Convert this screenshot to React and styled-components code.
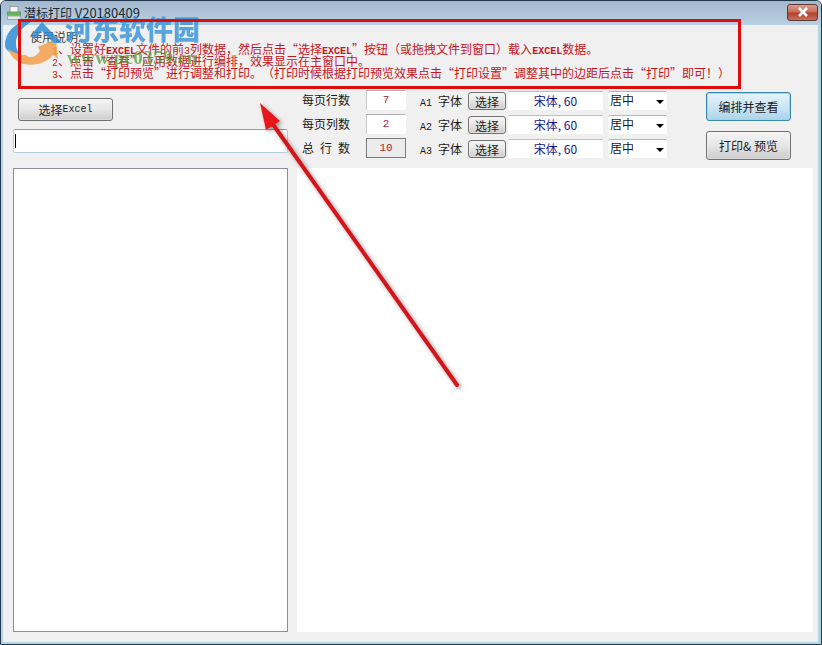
import React from "react"
import styled, { createGlobalStyle } from "styled-components"

const CJK = `"Noto Sans CJK SC", "Liberation Sans", sans-serif`

const GlobalStyle = createGlobalStyle`
  html, body {
    margin: 0;
    padding: 0;
    background: #f0f0f0;
  }
  * {
    box-sizing: border-box;
    text-spacing-trim: space-all;
  }
`

const Win = styled.div`
  position: relative;
  width: 822px;
  height: 645px;
  overflow: hidden;
  display: flex;
  flex-direction: column;
  border: 1px solid #22394d;
  border-radius: 6px 6px 0 0;
  background: #b5d3e6;
  font-family: ${CJK};
  font-size: 12px;
  color: #1a1a1a;
`

const TitleBar = styled.div`
  height: 24px;
  flex: none;
  display: flex;
  align-items: center;
  padding: 1px 3px 0 6px;
  background: linear-gradient(#a3b8cd, #b9d0e1);
`

const TitleText = styled.div`
  margin-left: 3px;
  margin-top: -2px;
  font-size: 12px;
  line-height: 14px;
  color: #1c2733;
`

const TitleVersion = styled.span`
  font-size: 13px;
`

const CloseBtn = styled.div`
  margin-left: auto;
  margin-top: -3px;
  width: 31px;
  height: 17px;
  display: flex;
  align-items: center;
  justify-content: center;
  border: 1px solid #5a3a35;
  border-radius: 3px;
  background: linear-gradient(#dc9d8e 0%, #c96a56 48%, #b0402c 52%, #c9705c 100%);
`

const Client = styled.div`
  flex: 1;
  min-height: 0;
  margin: 0 3px 2px 2px;
  padding: 0 5px 10px 10px;
  display: flex;
  flex-direction: column;
  background: #f0f0f0;
`

const Intro = styled.div`
  height: 65px;
  flex: none;
  padding-left: 17px;
  color: #c5161d;
`

const IntroHead = styled.div`
  color: #444;
  height: 18px;
  padding-top: 5px;
  line-height: 14px;
`

const IntroLine = styled.div`
  height: 12px;
  line-height: 12px;
  padding-left: 22px;
  white-space: nowrap;
`

const Lat = styled.span`
  font-family: "Liberation Mono", monospace;
  font-size: 10px;
  line-height: 1;
  font-weight: ${p => (p.$bold ? 700 : 400)};
`

const Body = styled.div`
  flex: 1;
  min-height: 0;
  display: flex;
  gap: 9px;
`

const LeftCol = styled.div`
  width: 275px;
  flex: none;
  display: flex;
  flex-direction: column;
  padding-top: 8px;
`

const RightCol = styled.div`
  flex: 1;
  min-width: 0;
  display: flex;
  flex-direction: column;
`

const Button = styled.div`
  display: flex;
  align-items: center;
  justify-content: center;
  flex: none;
  width: ${p => p.$w}px;
  height: ${p => p.$h}px;
  border: 1px solid ${p => (p.$focus ? "#3a87ad" : "#707070")};
  border-radius: 3px;
  background: ${p =>
    p.$focus
      ? "linear-gradient(#e6f3fa 0%, #cde6f4 50%, #a9d3ea 100%)"
      : "linear-gradient(#f4f4f4 0%, #e6e6e6 50%, #cccccc 100%)"};
  box-shadow: ${p => (p.$focus ? "inset 0 0 0 1px #9fd6ee" : "inset 0 0 0 1px #fbfbfb55")};
  color: #222;
`

const ExcelBtn = styled(Button)`
  margin-left: 5px;
`

const PathInput = styled.div`
  position: relative;
  height: 24px;
  flex: none;
  margin-top: 8px;
  background: #fff;
  border: 1px solid #b4cfe0;
  border-top-color: #7fa3bf;
  border-radius: 2px;
  &::before {
    content: "";
    position: absolute;
    left: 1px;
    top: 4px;
    width: 1px;
    height: 14px;
    background: #000;
  }
`

const FileList = styled.div`
  flex: 1;
  margin-top: 15px;
  background: #fff;
  border: 1px solid #8a8f95;
`

const Controls = styled.div`
  height: 78px;
  flex: none;
  display: flex;
  padding-left: 5px;
`

const Rows = styled.div`
  display: flex;
  flex-direction: column;
  gap: 4px;
`

const Row = styled.div`
  height: 20px;
  display: flex;
  align-items: center;
`

const Label = styled.div`
  width: 48px;
  margin-right: 16px;
  line-height: 20px;
  white-space: nowrap;
`

const NumField = styled.div`
  width: 40px;
  height: 20px;
  margin-right: 14px;
  display: flex;
  align-items: center;
  justify-content: center;
  border: 1px solid ${p => (p.$readOnly ? "#7a7a7a" : "#fff")};
  border-top-color: ${p => (p.$readOnly ? "#7a7a7a" : "#b0b0b0")};
  border-left-color: ${p => (p.$readOnly ? "#7a7a7a" : "#c8c8c8")};
  background: ${p => (p.$readOnly ? "#ececec" : "#fff")};
  color: #b01c2e;
  font-family: "Liberation Mono", monospace;
  font-size: 11px;
`

const FontLabel = styled.div`
  width: 41px;
  margin-right: 7px;
  white-space: nowrap;
`

const SmallBtn = styled(Button)`
  align-self: flex-end;
  margin-right: 2px;
`

const FontField = styled.div`
  width: 95px;
  height: 19px;
  margin-right: 5px;
  display: flex;
  align-items: center;
  justify-content: center;
  background: #fff;
  border-top: 1px solid #c0c0c0;
  border-radius: 2px;
  color: #16168c;
`

const AlignSelect = styled.div`
  position: relative;
  width: 59px;
  height: 19px;
  padding-left: 2px;
  line-height: 15px;
  background: #fff;
  border-top: 1px solid #b8b8b8;
  border-radius: 2px;
  &::after {
    content: "";
    position: absolute;
    right: 3px;
    top: 8px;
    border: 4px solid transparent;
    border-top: 4px solid #000;
    border-bottom: 0;
  }
`

const Actions = styled.div`
  display: flex;
  flex-direction: column;
  gap: 10px;
  margin-left: 39px;
  padding-top: 2px;
`

const Preview = styled.div`
  flex: 1;
  background: #fff;
`

const RedBox = styled.div`
  position: absolute;
  left: 17px;
  top: 18px;
  width: 723px;
  height: 70px;
  border: 3px solid #e00b0b;
  pointer-events: none;
`

const LogoSvg = styled.svg`
  position: absolute;
  left: 3px;
  top: 16px;
  opacity: 0.85;
`

const WaterTitle = styled.div`
  position: absolute;
  left: 64px;
  top: 11px;
  font-size: 27px;
  font-weight: 900;
  line-height: 34px;
  color: #3f97d9;
  opacity: 0.85;
  white-space: nowrap;
`

const WaterUrl = styled.div`
  position: absolute;
  left: 66px;
  top: 47px;
  font-family: "Liberation Serif", serif;
  font-size: 19px;
  font-weight: 700;
  line-height: 20px;
  letter-spacing: 0.4px;
  color: #4f9a2e;
  opacity: 0.7;
  white-space: nowrap;
`

const ArrowSvg = styled.svg`
  position: absolute;
  left: 0;
  top: 0;
  pointer-events: none;
`

const PrinterIcon = () => (
  <svg width="14" height="15" viewBox="0 0 14 15">
    <rect x="3" y="0.5" width="8" height="6" fill="#f6f6f6" stroke="#9a9a9a" />
    <rect x="0.5" y="6" width="13" height="6" fill="#5dbb5a" stroke="#6f8f6f" />
    <rect x="0.5" y="10" width="13" height="3.5" fill="#e8e8e8" stroke="#9aa" />
  </svg>
)

const CloseIcon = () => (
  <svg width="12" height="10" viewBox="0 0 12 10">
    <path d="M2 1 L10 9 M10 1 L2 9" stroke="#fff" strokeWidth="2.6" />
  </svg>
)

const fontRows = [
  { label: "每页行数", value: "7", font: "A1" },
  { label: "每页列数", value: "2", font: "A2" },
  { label: "总\u2002行\u2002数", value: "10", font: "A3", readOnly: true },
]

const App = () => {
  return (
    <>
      <GlobalStyle />
      <Win>
        <TitleBar>
          <PrinterIcon />
          <TitleText>
            潜标打印 <TitleVersion>V20180409</TitleVersion>
          </TitleText>
          <CloseBtn>
            <CloseIcon />
          </CloseBtn>
        </TitleBar>
        <Client>
          <Intro>
            <IntroHead>使用说明:</IntroHead>
            <IntroLine>
              <Lat>1</Lat>、设置好<Lat $bold>EXCEL</Lat>文件的前<Lat>3</Lat>列数据，然后点击“选择<Lat $bold>EXCEL</Lat>”按钮（或拖拽文件到窗口）载入<Lat $bold>EXCEL</Lat>数据。
            </IntroLine>
            <IntroLine>
              <Lat>2</Lat>、点击“查看”应用数据进行编排，效果显示在主窗口中。
            </IntroLine>
            <IntroLine>
              <Lat>3</Lat>、点击“打印预览”进行调整和打印。（打印时候根据打印预览效果点击“打印设置”调整其中的边距后点击“打印”即可！）
            </IntroLine>
          </Intro>
          <Body>
            <LeftCol>
              <ExcelBtn $w={95} $h={23}>
                选择<Lat>Excel</Lat>
              </ExcelBtn>
              <PathInput />
              <FileList />
            </LeftCol>
            <RightCol>
              <Controls>
                <Rows>
                  {fontRows.map(r => (
                    <Row key={r.font}>
                      <Label>{r.label}</Label>
                      <NumField $readOnly={r.readOnly}>{r.value}</NumField>
                      <FontLabel>
                        <Lat>{r.font}</Lat>{"\u2002"}字体
                      </FontLabel>
                      <SmallBtn $w={38} $h={18}>选择</SmallBtn>
                      <FontField>宋体, 60</FontField>
                      <AlignSelect>居中</AlignSelect>
                    </Row>
                  ))}
                </Rows>
                <Actions>
                  <Button $w={85} $h={29} $focus>编排并查看</Button>
                  <Button $w={85} $h={29}>打印&amp; 预览</Button>
                </Actions>
              </Controls>
              <Preview />
            </RightCol>
          </Body>
        </Client>

        <LogoSvg width="60" height="52" viewBox="0 0 60 52">
          <path d="M1 28 C1 14 14 2 34 1 C24 6 12 14 12 26 C12 32 14 36 17 38 C8 38 1 34 1 28 Z" fill="#2f8fd6" />
          <path d="M4 32 C10 36 16 38 22 38 C26 42 32 40 36 34 L34 30 L52 22 L54 42 L49 38 C40 50 12 54 4 32 Z" fill="#f2a04a" />
          <path d="M38 5 L58 26 L50 26 L38 14 L30 22 L27 18 Z" fill="#2f8fd6" />
        </LogoSvg>
        <WaterTitle>河东软件园</WaterTitle>
        <WaterUrl>www.pc0359.cn</WaterUrl>
        <RedBox />
        <ArrowSvg width="822" height="645" viewBox="0 0 822 645">
          <defs>
            <filter id="arrowShadow" x="-20%" y="-20%" width="140%" height="140%">
              <feDropShadow dx="2" dy="2" stdDeviation="2" floodColor="#000" floodOpacity="0.4" />
            </filter>
          </defs>
          <g filter="url(#arrowShadow)">
            <path d="M456 384 L271 122" stroke="#d4181a" strokeWidth="4" strokeLinecap="round" />
            <path d="M259 102 L279 120 L265 129 Z" fill="#e8161a" />
          </g>
        </ArrowSvg>
      </Win>
    </>
  )
}

export default App
